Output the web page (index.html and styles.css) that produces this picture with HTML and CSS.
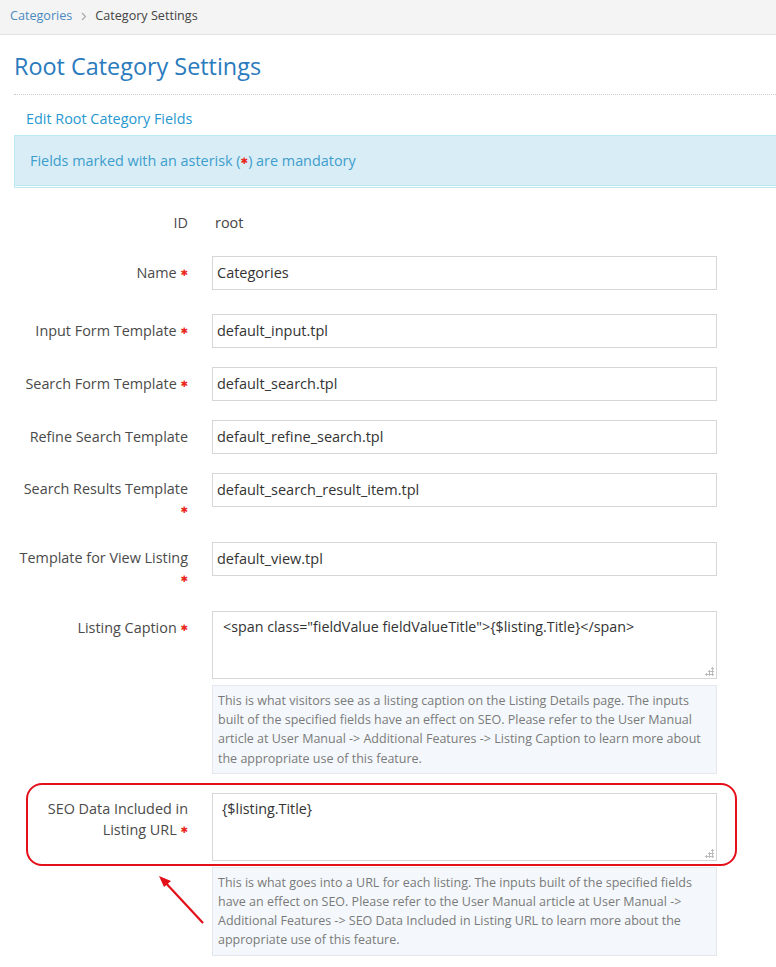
FILE: index.html
```html
<!DOCTYPE html>
<html>
<head>
<meta charset="utf-8">
<link rel="stylesheet" href="styles.css">
</head>
<body>
<div class="crumbs">
  <a class="crumb-link">Categories</a>
  <svg class="crumb-sep" width="6" height="9" viewBox="0 0 6 9"><path d="M1 1 L4.5 4.5 L1 8" fill="none" stroke="#a8a8a8" stroke-width="1.1"/></svg>
  <span class="crumb-current">Category Settings</span>
</div>
<div class="page">
  <h1 class="title">Root Category Settings</h1>
  <div class="subtitle">Edit Root Category Fields</div>
  <div class="alert">Fields marked with an asterisk (<span class="req">✱</span>) are mandatory</div>

  <div class="form">
    <div class="row row-id">
      <div class="label">ID</div>
      <div class="field"><span class="static">root</span></div>
    </div>
    <div class="row row-name">
      <div class="label">Name <span class="req">✱</span></div>
      <div class="field"><div class="input">Categories</div></div>
    </div>
    <div class="row">
      <div class="label">Input Form Template <span class="req">✱</span></div>
      <div class="field"><div class="input">default_input.tpl</div></div>
    </div>
    <div class="row">
      <div class="label">Search Form Template <span class="req">✱</span></div>
      <div class="field"><div class="input">default_search.tpl</div></div>
    </div>
    <div class="row">
      <div class="label">Refine Search Template</div>
      <div class="field"><div class="input">default_refine_search.tpl</div></div>
    </div>
    <div class="row row-tall">
      <div class="label">Search Results Template <span class="req">✱</span></div>
      <div class="field"><div class="input">default_search_result_item.tpl</div></div>
    </div>
    <div class="row row-tall">
      <div class="label">Template for View Listing <span class="req">✱</span></div>
      <div class="field"><div class="input">default_view.tpl</div></div>
    </div>
    <div class="row">
      <div class="label">Listing Caption <span class="req">✱</span></div>
      <div class="field">
        <div class="textarea">&lt;span class="fieldValue fieldValueTitle"&gt;{$listing.Title}&lt;/span&gt;<span class="grip"></span></div>
        <div class="help">This is what visitors see as a listing caption on the Listing Details page. The inputs built of the specified fields have an effect on SEO. Please refer to the User Manual article at User Manual -&gt; Additional Features -&gt; Listing Caption to learn more about the appropriate use of this feature.</div>
      </div>
    </div>
    <div class="row row-seo">
      <div class="label"><span>SEO Data Included in</span><br><span>Listing URL</span> <span class="req">✱</span></div>
      <div class="field">
        <div class="textarea">{$listing.Title}<span class="grip"></span></div>
        <div class="help">This is what goes into a URL for each listing. The inputs built of the specified fields have an effect on SEO. Please refer to the User Manual article at User Manual -&gt; Additional Features -&gt; SEO Data Included in Listing URL to learn more about the appropriate use of this feature.</div>
      </div>
      <div class="highlight"></div>
      <svg class="arrow" width="50" height="52" viewBox="0 0 50 52">
        <path d="M46 48 L6 5" stroke="#e3101a" stroke-width="2.2" fill="none"/>
        <path d="M2 1 L14 6 L7 12 Z" fill="#e3101a"/>
      </svg>
    </div>
  </div>
</div>
</body>
</html>
```

FILE: styles.css
```css
html, body {
  margin: 0;
  padding: 0;
  background: #fff;
}
body {
  font-family: "Open Sans", "Noto Sans", sans-serif;
  font-size: 14.4px;
  color: #444;
  width: 776px;
  overflow: hidden;
}
.crumbs {
  height: 35px;
  box-sizing: border-box;
  background: #f4f4f4;
  border-bottom: 1px solid #e3e3e3;
  display: flex;
  align-items: flex-start;
  padding: 7px 0 0 10px;
  font-size: 12.6px;
  line-height: 18px;
}
.crumb-link {
  color: #4a8ac0;
}
.crumb-sep {
  margin: 5px 8px 0 9px;
}
.crumb-current {
  color: #444;
}
.page {
  padding-left: 14px;
}
.title {
  margin: 0;
  padding: 13px 0 10px 0;
  font-size: 23.4px;
  font-weight: 400;
  color: #2a7bbd;
  line-height: 36px;
  border-bottom: 1px dotted #d0d0d0;
}
.subtitle {
  color: #2898d0;
  padding: 12px 0 0 12px;
  line-height: 23px;
  height: 28px;
}
.alert {
  background: #d9edf7;
  background-clip: padding-box;
  border: 1px solid #bce8f1;
  border-bottom: 3px double #bce8f1;
  border-right: none;
  color: #3d9dcb;
  padding: 0 0 0 15px;
  height: 49px;
  line-height: 49px;
}
.req {
  color: #e8261c;
  font-size: 9px;
  line-height: 1;
  vertical-align: 2px;
  font-family: "DejaVu Sans", sans-serif;
}
.form {
  padding-top: 18px;
}
.row {
  display: flex;
  margin-bottom: 19px;
  position: relative;
}
.row-id {
  margin-bottom: 18px;
}
.row-name {
  margin-bottom: 24px;
}
.label {
  width: 174px;
  flex: none;
  text-align: right;
  color: #4a4a4a;
  line-height: 21px;
  padding: 6px 0 5px;
  box-sizing: border-box;
}
.row-tall {
  height: 50px;
}
.row-tall .label {
  padding: 5px 0 3px 0;
}
.field {
  margin-left: 24px;
  width: 505px;
  flex: none;
}
.static {
  display: block;
  line-height: 21px;
  padding: 6px 0 0 3px;
  color: #444;
}
.input {
  height: 34px;
  border: 1px solid #d6d6d6;
  box-sizing: border-box;
  padding: 0 4px;
  line-height: 32px;
  color: #333;
  font-size: 14.5px;
}
.textarea {
  position: relative;
  height: 68px;
  border: 1px solid #d6d6d6;
  box-sizing: border-box;
  padding: 5px 10px;
  line-height: 20px;
  color: #333;
  font-size: 14.3px;
}
.row-seo .textarea {
  padding-left: 9px;
}
.grip {
  position: absolute;
  right: 2px;
  bottom: 2px;
  width: 9px;
  height: 9px;
  background:
    radial-gradient(circle, #bbb 1px, transparent 1.2px) 6px 0 / 3px 3px no-repeat,
    radial-gradient(circle, #bbb 1px, transparent 1.2px) 3px 3px / 3px 3px no-repeat,
    radial-gradient(circle, #bbb 1px, transparent 1.2px) 6px 3px / 3px 3px no-repeat,
    radial-gradient(circle, #bbb 1px, transparent 1.2px) 0 6px / 3px 3px no-repeat,
    radial-gradient(circle, #bbb 1px, transparent 1.2px) 3px 6px / 3px 3px no-repeat,
    radial-gradient(circle, #bbb 1px, transparent 1.2px) 6px 6px / 3px 3px no-repeat;
}
.help {
  margin-top: 6px;
  background: #f4f8fc;
  border: 1px solid #e4e8ec;
  padding: 5px 6px 5px 5px;
  font-size: 12.5px;
  line-height: 19.2px;
  color: #7a7a7a;
}
.row-seo .label {
  padding-top: 5px;
}
.highlight {
  position: absolute;
  left: 12px;
  top: -10px;
  width: 711px;
  height: 83px;
  border: 2px solid #e3101a;
  border-radius: 16px;
  box-sizing: border-box;
  pointer-events: none;
}
.arrow {
  position: absolute;
  left: 143px;
  top: 82px;
}
```
